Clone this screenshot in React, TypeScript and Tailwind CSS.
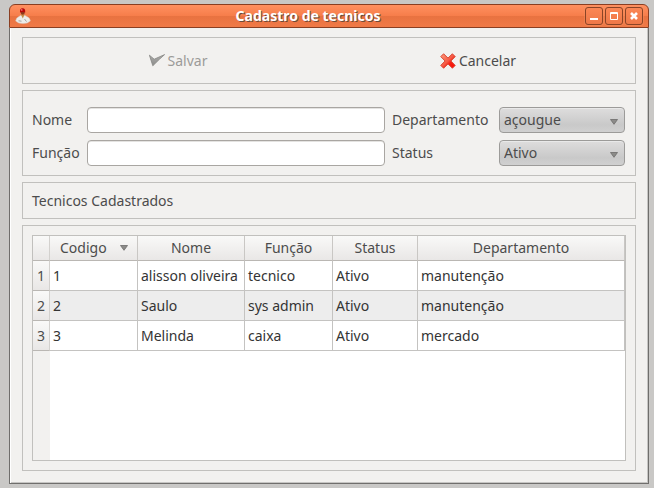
import { useState, type ReactNode } from "react";

const rows = [
  ["1", "alisson oliveira", "tecnico", "Ativo", "manutenção"],
  ["2", "Saulo", "sys admin", "Ativo", "manutenção"],
  ["3", "Melinda", "caixa", "Ativo", "mercado"],
];

const headers = ["Codigo", "Nome", "Função", "Status", "Departamento"];

function UserIcon() {
  return (
    <svg width="16" height="16" viewBox="0 0 16 16" aria-hidden="true">
      <path d="M0.6 13 Q1 9.6 4 8.4 L6 7.2 L9.6 7.2 L11.8 8.4 Q15 9.6 15.4 13 Q12.5 15.8 8 15.6 Q3.5 15.8 0.6 13Z" fill="#ecece9" stroke="#d9c4b8" strokeWidth="0.5" />
      <path d="M5.8 6.4 L7.8 10.4 L9.6 6.4Z" fill="#c28a45" />
      <circle cx="7.7" cy="4.8" r="2" fill="#8c3a1c" />
      <path d="M5 4.4 Q4.6 0.3 7.6 0.3 Q10.6 0.3 10.2 4.4 Q7.7 3.8 5 4.4Z" fill="#b80808" />
      <circle cx="6.7" cy="1.9" r="0.9" fill="#f06a6a" />
      <path d="M3.5 12.8 L6.5 13.2 M9.5 11 L11.5 13.6" stroke="#8f8f8a" strokeWidth="0.8" />
    </svg>
  );
}

function CheckIcon() {
  return (
    <svg width="16" height="16" viewBox="0 0 16 16" aria-hidden="true">
      <defs>
        <linearGradient id="check" x1="0" y1="0" x2="0" y2="1">
          <stop offset="0" stopColor="#aeaeac" />
          <stop offset="1" stopColor="#8c8c8a" />
        </linearGradient>
      </defs>
      <path d="M0.4 2.2 L5.2 6.2 L15.6 1.6 L10.4 6.3 L3.8 12.8 Z" fill="url(#check)" stroke="#868684" strokeWidth="0.8" strokeLinejoin="round" />
    </svg>
  );
}

function CrossIcon() {
  return (
    <svg width="16" height="16" viewBox="0 0 16 16" aria-hidden="true">
      <defs>
        <linearGradient id="cross" x1="0" y1="0" x2="1" y2="1">
          <stop offset="0" stopColor="#ff9c7c" />
          <stop offset="0.5" stopColor="#f55a45" />
          <stop offset="0.65" stopColor="#f51f12" />
          <stop offset="1" stopColor="#ff0a00" />
        </linearGradient>
      </defs>
      <path d="M3.6 0.8 L8 5.1 L12.4 0.8 L15.2 3.6 L10.9 8 L15.2 12.4 L12.4 15.2 L8 10.9 L3.6 15.2 L0.8 12.4 L5.1 8 L0.8 3.6Z" fill="url(#cross)" stroke="#d84634" strokeWidth="1" strokeLinejoin="round" />
    </svg>
  );
}

function Arrow() {
  return (
    <svg width="8" height="6" viewBox="0 0 8 6" aria-hidden="true">
      <path d="M0.5 0.5 H7.5 L4 5.3Z" fill="#8c8b89" stroke="#6c6b69" strokeWidth="0.8" />
    </svg>
  );
}

function WindowButton({ label, children }: { label: string; children: ReactNode }) {
  return (
    <button
      type="button"
      aria-label={label}
      className="flex size-[18px] items-center justify-center rounded-[3px] border border-[#8a4426] bg-linear-to-b from-[#fb8755] to-[#ee7848] shadow-[0_0_0_1px_#f7905f66]"
    >
      <svg width="8" height="8" viewBox="0 0 8 8" fill="none" stroke="white" aria-hidden="true">
        {children}
      </svg>
    </button>
  );
}

function Combo({ id, options }: { id: string; options: string[] }) {
  return (
    <div className="grid items-center">
      <select
        id={id}
        className="col-start-1 row-start-1 h-[26px] w-full appearance-none rounded-[4px] border border-[#9c9b99] bg-linear-to-b from-[#dedddd] via-[#c9c9c9] via-70% to-[#d0d0d0] pl-1 pr-5 shadow-[inset_0_1px_0_#e9e9e9]"
      >
        {options.map((option) => (
          <option key={option}>{option}</option>
        ))}
      </select>
      <span className="pointer-events-none col-start-1 row-start-1 justify-self-end pr-[7px] pt-1">
        <Arrow />
      </span>
    </div>
  );
}

const frame = "border border-[#c1c0bd]";
const field =
  "h-[26px] w-full min-w-0 rounded-[4px] border border-[#a9a6a2] bg-white px-1 shadow-[inset_0_1px_0_#e4e3e1]";
const headFill = "bg-linear-to-b from-[#f9f9f8] to-[#e9e7e6]";

export default function App() {
  const [name, setName] = useState("");
  const [role, setRole] = useState("");

  return (
    <div className="flex min-h-screen flex-col bg-[#c9c8c6] pb-1 pl-[9px] pr-[5px] pt-1 font-['Noto_Sans','Open_Sans',sans-serif] text-sm leading-5 text-[#4c4c4c]">
      <div className="flex grow flex-col">
        <header className="flex h-6 items-center justify-between rounded-t-[6px] border border-[#8a3f22] bg-[linear-gradient(#ff9060,#f67d4a_50%,#e87240_50%,#f07a47)] px-[5px]">
          <UserIcon />
          <h1 className="font-bold text-white [text-shadow:1px_1px_0_#6e4a38]">Cadastro de tecnicos</h1>
          <div className="flex gap-[2px]">
            <WindowButton label="Minimizar">
              <path d="M0 7h8" strokeWidth="2" />
            </WindowButton>
            <WindowButton label="Maximizar">
              <path d="M0.5 0.5h7v7h-7zM0 1.5h8" />
            </WindowButton>
            <WindowButton label="Fechar">
              <path d="M1 1l6 6M7 1l-6 6" strokeWidth="2.6" />
            </WindowButton>
          </div>
        </header>

        <main className="flex grow flex-col gap-1.5 border border-t-0 border-[#6f6e6c] bg-[#f2f1ef] px-3 pb-3 pt-[9px] shadow-[inset_1px_0_0_#fff,inset_-1px_-1px_0_#c6c5c3]">
          <div className={`grid h-[47px] grid-cols-2 gap-1.5 pl-2 pr-[10px] ${frame}`}>
            <button type="button" disabled className="flex items-center justify-center gap-[3px] text-[#9c9b99]">
              <CheckIcon />
              Salvar
            </button>
            <button type="button" className="flex items-center justify-center gap-[3px]">
              <CrossIcon />
              Cancelar
            </button>
          </div>

          <form
            className={`grid grid-cols-[48px_1fr_100px_126px] items-center gap-[7px] pb-[9px] pl-[9px] pr-[10px] pt-4 ${frame}`}
          >
            <label htmlFor="nome">Nome</label>
            <input id="nome" className={field} value={name} onChange={(e) => setName(e.target.value)} />
            <label htmlFor="departamento">Departamento</label>
            <Combo id="departamento" options={["açougue", "manutenção", "mercado"]} />
            <label htmlFor="funcao">Função</label>
            <input id="funcao" className={field} value={role} onChange={(e) => setRole(e.target.value)} />
            <label htmlFor="status">Status</label>
            <Combo id="status" options={["Ativo", "Inativo"]} />
          </form>

          <h2 className={`flex h-[37px] items-center px-[9px] ${frame}`}>Tecnicos Cadastrados</h2>

          <section className={`flex grow flex-col p-[9px] ${frame}`}>
            <div className="flex grow flex-col border border-[#c1c0bd] bg-linear-to-r from-[#f2f1ef] from-[17px] to-white to-[17px]">
              <table className="w-full table-fixed border-separate border-spacing-0">
                <colgroup>
                  <col className="w-[17px]" />
                  <col className="w-[88px]" />
                  <col className="w-[107px]" />
                  <col className="w-[88px]" />
                  <col className="w-[85px]" />
                  <col />
                </colgroup>
                <thead>
                  <tr className="h-[25px]">
                    <td className={`border-b border-r border-b-[#bab7b3] border-r-[#d3d1ce] ${headFill}`} />
                    {headers.map((header, index) => (
                      <th
                        key={header}
                        scope="col"
                        className={`border-b border-r border-b-[#bab7b3] border-r-[#c9c7c4] p-0 font-normal ${headFill}`}
                      >
                        {index === 0 ? (
                          <span className="flex items-center justify-between pl-2.5 pr-[9px]">
                            {header}
                            <Arrow />
                          </span>
                        ) : (
                          header
                        )}
                      </th>
                    ))}
                  </tr>
                </thead>
                <tbody className="text-[#343434]">
                  {rows.map((row, index) => (
                    <tr key={row[0]} className="h-[30px] bg-white even:bg-[#ededed]">
                      <th
                        scope="row"
                        className={`border-b border-r border-b-[#bab7b3] border-r-[#d3d1ce] p-0 font-normal text-[#4c4c4c] ${headFill}`}
                      >
                        {index + 1}
                      </th>
                      {row.map((cell, column) => (
                        <td key={headers[column]} className="whitespace-nowrap border-b border-r border-[#c4c3c1] p-0 pl-[3px]">
                          {cell}
                        </td>
                      ))}
                    </tr>
                  ))}
                </tbody>
              </table>
            </div>
          </section>
        </main>
      </div>
    </div>
  );
}
